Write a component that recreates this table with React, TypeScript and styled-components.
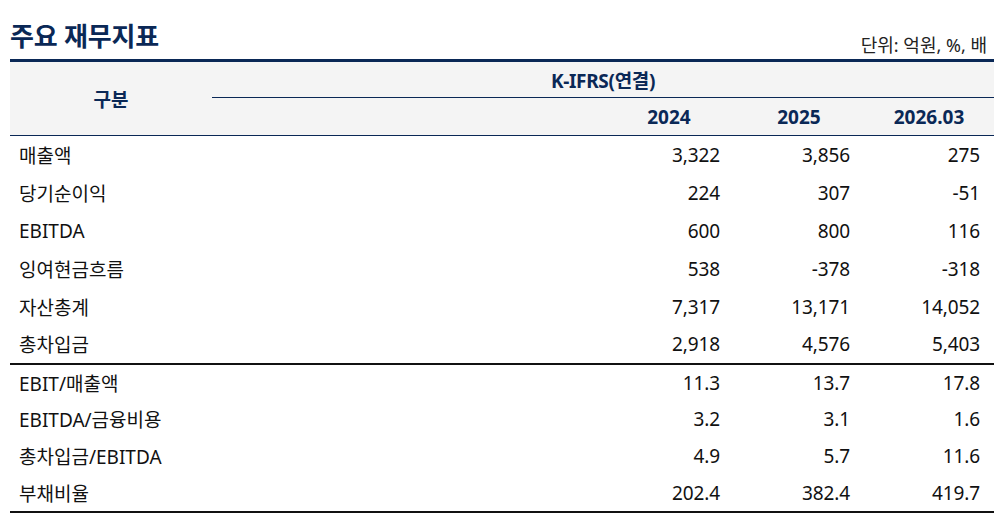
import styled, { createGlobalStyle } from "styled-components";

const GlobalStyle = createGlobalStyle`
  body {
    margin: 0;
    background: #ffffff;
    font-family: "Noto Sans", "Noto Sans CJK KR", sans-serif;
    color: #111111;
  }
`;

const NAVY = "#0a2856";

const Page = styled.div`
  width: 1008px;
  padding: 0 14px 0 10px;
  box-sizing: border-box;
`;

const TitleBar = styled.div`
  display: flex;
  justify-content: space-between;
  align-items: flex-end;
  height: 59px;
  padding-bottom: 4px;
  box-sizing: border-box;
`;

const Title = styled.h1`
  margin: 0;
  font-size: 26px;
  font-weight: 700;
  color: ${NAVY};
  line-height: 1;
  padding-bottom: 6px;
  letter-spacing: -0.2px;
`;

const Unit = styled.span`
  font-size: 18px;
  color: #222;
  line-height: 1;
  padding-right: 7px;
  padding-bottom: 1px;
`;

const Table = styled.table`
  width: 984px;
  border-collapse: collapse;
  table-layout: fixed;
  border-top: 3px solid ${NAVY};
  border-bottom: 2px solid #111;
`;

const HeadRow = styled.tr<{ $h: number }>`
  background: #f4f4f4;
  height: ${(p) => p.$h}px;
`;

const Th = styled.th`
  padding: 0;
  font-size: 19px;
  font-weight: 700;
  color: ${NAVY};
  text-align: center;
  border-bottom: 1px solid ${NAVY};
`;

const GroupTh = styled(Th)`
  letter-spacing: -0.3px;
`;

const Row = styled.tr<{ $split?: boolean; $h: number }>`
  height: ${(p) => p.$h}px;
  border-top: ${(p) => (p.$split ? "2px solid #111" : "none")};
`;

const Label = styled.td`
  padding: 0 0 0 9px;
  font-size: 19px;
  white-space: nowrap;
`;

const Num = styled.td`
  padding: 0 14px 0 0;
  font-size: 19px;
  text-align: right;
  letter-spacing: -0.1px;
`;

type Item = { label: string; values: string[]; split?: boolean };

const items: Item[] = [
  { label: "매출액", values: ["3,322", "3,856", "275"] },
  { label: "당기순이익", values: ["224", "307", "-51"] },
  { label: "EBITDA", values: ["600", "800", "116"] },
  { label: "잉여현금흐름", values: ["538", "-378", "-318"] },
  { label: "자산총계", values: ["7,317", "13,171", "14,052"] },
  { label: "총차입금", values: ["2,918", "4,576", "5,403"] },
  { label: "EBIT/매출액", values: ["11.3", "13.7", "17.8"], split: true },
  { label: "EBITDA/금융비용", values: ["3.2", "3.1", "1.6"] },
  { label: "총차입금/EBITDA", values: ["4.9", "5.7", "11.6"] },
  { label: "부채비율", values: ["202.4", "382.4", "419.7"] },
];

const years = ["2024", "2025", "2026.03"];

export default function App() {
  return (
    <Page>
      <GlobalStyle />
      <TitleBar>
        <Title>주요 재무지표</Title>
        <Unit>단위: 억원, %, 배</Unit>
      </TitleBar>
      <Table>
        <colgroup>
          <col style={{ width: 202 }} />
          <col style={{ width: 392 }} />
          <col style={{ width: 130 }} />
          <col style={{ width: 130 }} />
          <col style={{ width: 130 }} />
        </colgroup>
        <thead>
          <HeadRow $h={37}>
            <Th rowSpan={2}>구분</Th>
            <GroupTh colSpan={4}>K-IFRS(연결)</GroupTh>
          </HeadRow>
          <HeadRow $h={38}>
            <Th />
            {years.map((y) => (
              <Th key={y}>{y}</Th>
            ))}
          </HeadRow>
        </thead>
        <tbody>
          {items.map((it, i) => (
            <Row key={it.label} $split={it.split} $h={i >= 6 ? 37 : 38}>
              <Label colSpan={2}>{it.label}</Label>
              {it.values.map((v, j) => (
                <Num key={j}>{v}</Num>
              ))}
            </Row>
          ))}
        </tbody>
      </Table>
    </Page>
  );
}
